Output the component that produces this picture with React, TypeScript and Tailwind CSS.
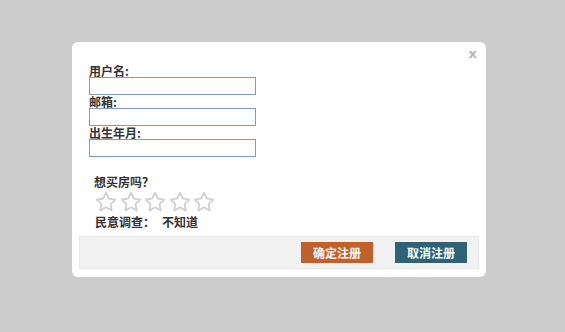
import React from "react";

const font = { fontFamily: '"Noto Sans CJK SC", "Liberation Sans", sans-serif' };

function Star() {
  return (
    <svg width="22" height="22" viewBox="0 0 24 24" className="block">
      <path
        d="M12 1.8l3.1 6.6 7.1.9-5.2 4.9 1.3 7.1L12 17.8l-6.3 3.5 1.3-7.1-5.2-4.9 7.1-.9z"
        fill="#ffffff"
        stroke="#cfcfcf"
        strokeWidth="1.9"
        strokeLinejoin="round"
      />
    </svg>
  );
}

function Field({ label }: { label: string }) {
  return (
    <div>
      <div className="text-[12px] leading-[13px] font-bold text-[#333]">{label}</div>
      <input className="block w-[167px] h-[18px] border border-[#7f9db9] bg-white outline-none" />
    </div>
  );
}

export default function App() {
  return (
    <div className="w-full h-[332px] bg-[#cccccc] pt-[42px] pl-[72px]" style={font}>
      <div className="relative w-[414px] h-[235px] bg-white rounded-[6px] flex flex-col">
        <span
          className="absolute right-[9px] top-[2px] text-[13px] font-bold text-[#b4b4b4]"
          style={{ fontFamily: '"DejaVu Sans", sans-serif' }}
        >
          x
        </span>

        <div className="pl-[17px] pt-[22px]">
          <Field label="用户名:" />
          <Field label="邮箱:" />
          <Field label="出生年月:" />
        </div>

        <div className="pl-[22px] pt-[18px]">
          <div className="text-[12px] leading-[14px] font-bold text-[#333]">想买房吗？</div>
        </div>
        <div className="pl-[23px] pt-[2px] flex gap-[2.5px]">
          <Star />
          <Star />
          <Star />
          <Star />
          <Star />
        </div>
        <div className="pl-[23px] pt-[2px] text-[12px] leading-[14px] font-bold text-[#333]">
          民意调查：<span className="ml-[7px]">不知道</span>
        </div>

        <div className="mt-auto mb-[8px] mx-[7px] h-[33px] bg-[#f2f2f2] border border-[#e8e8e8] flex items-center justify-end pr-[11px] gap-[22px]">
          <button className="w-[72px] h-[21px] bg-[#c1602a] text-white text-[12px] font-bold leading-[21px]">
            确定注册
          </button>
          <button className="w-[72px] h-[21px] bg-[#2e6276] text-white text-[12px] font-bold leading-[21px]">
            取消注册
          </button>
        </div>
      </div>
    </div>
  );
}
